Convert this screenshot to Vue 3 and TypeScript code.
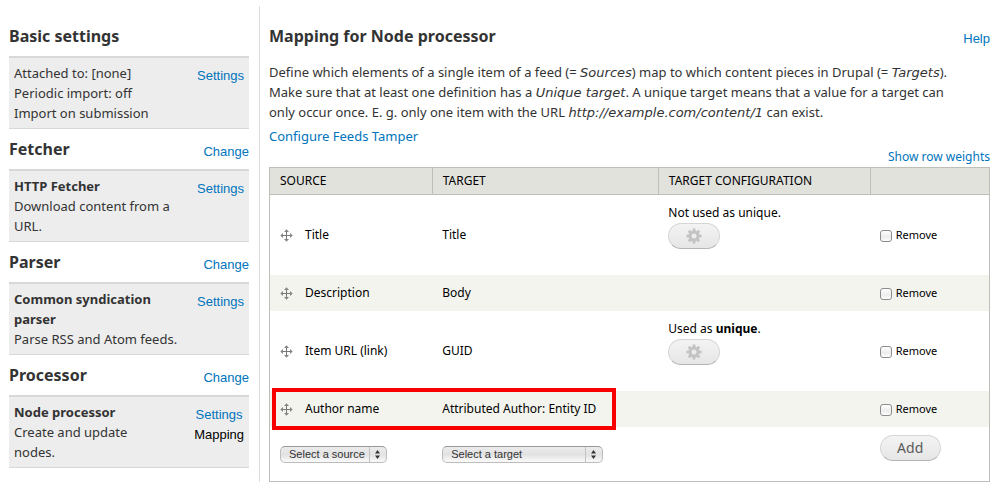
<script setup lang="ts">
import { ref } from 'vue'

interface Action {
  label: string
  active?: boolean
}
interface Block {
  heading: string
  change: boolean
  name?: string
  lines: string[]
  actions: Action[]
}
interface Mapping {
  id: string
  source: string
  target: string
  config?: { text: string; strong?: string }
  highlighted?: boolean
}

const blocks: Block[] = [
  {
    heading: 'Basic settings',
    change: false,
    lines: ['Attached to: [none]', 'Periodic import: off', 'Import on submission'],
    actions: [{ label: 'Settings' }],
  },
  {
    heading: 'Fetcher',
    change: true,
    name: 'HTTP Fetcher',
    lines: ['Download content from a URL.'],
    actions: [{ label: 'Settings' }],
  },
  {
    heading: 'Parser',
    change: true,
    name: 'Common syndication parser',
    lines: ['Parse RSS and Atom feeds.'],
    actions: [{ label: 'Settings' }],
  },
  {
    heading: 'Processor',
    change: true,
    name: 'Node processor',
    lines: ['Create and update', 'nodes.'],
    actions: [{ label: 'Settings' }, { label: 'Mapping', active: true }],
  },
]

const mappings: Mapping[] = [
  { id: 'title', source: 'Title', target: 'Title', config: { text: 'Not used as unique.' } },
  { id: 'description', source: 'Description', target: 'Body' },
  { id: 'url', source: 'Item URL (link)', target: 'GUID', config: { text: 'Used as ', strong: 'unique' } },
  { id: 'author', source: 'Author name', target: 'Attributed Author: Entity ID', highlighted: true },
]

const removed = ref<string[]>([])
const gearTeeth = [0, 45, 90, 135, 180, 225, 270, 315]
</script>

<template>
  <div class="page">
    <aside class="sidebar">
      <section v-for="block in blocks" :key="block.heading" class="block">
        <header class="block-head">
          <h2>{{ block.heading }}</h2>
          <a v-if="block.change" class="action" href="#">Change</a>
        </header>
        <div class="block-body">
          <div class="block-text">
            <strong v-if="block.name">{{ block.name }}</strong>
            <span v-for="line in block.lines" :key="line">{{ line }}</span>
          </div>
          <nav class="block-actions">
            <a
              v-for="action in block.actions"
              :key="action.label"
              class="action"
              :class="{ active: action.active }"
              href="#"
            >{{ action.label }}</a>
          </nav>
        </div>
      </section>
    </aside>

    <main class="main">
      <header class="main-head">
        <h2>Mapping for Node processor</h2>
        <a class="action" href="#">Help</a>
      </header>
      <p class="intro">
        Define which elements of a single item of a feed (= <em>Sources</em>) map to which content pieces in Drupal (= <em>Targets</em>).<br>
        Make sure that at least one definition has a <em>Unique target</em>. A unique target means that a value for a target can<br>
        only occur once. E. g. only one item with the URL <em>http://example.com/content/1</em> can exist.
      </p>
      <a class="tamper" href="#">Configure Feeds Tamper</a>
      <div class="weights"><a href="#">Show row weights</a></div>

      <table>
        <colgroup>
          <col class="c-source">
          <col class="c-target">
          <col class="c-config">
          <col class="c-remove">
        </colgroup>
        <thead>
          <tr>
            <th scope="col">SOURCE</th>
            <th scope="col">TARGET</th>
            <th scope="col">TARGET CONFIGURATION</th>
            <th scope="col" aria-label="Operations"></th>
          </tr>
        </thead>
        <tbody>
          <tr v-for="row in mappings" :key="row.id" class="row">
            <td>
              <div class="source">
                <a class="handle" href="#" aria-label="Drag to re-order">
                  <svg viewBox="0 0 13 13" width="13" height="13" aria-hidden="true">
                    <path d="M6.5 1v11M1 6.5h11" stroke="#777" fill="none" />
                    <path d="M4 3 6.500 .3 9 3ZM4 10l2.500 2.700L9 10ZM3 4 .3 6.500 3 9ZM10 4l2.700 2.500L10 9Z" fill="#858585" />
                  </svg>
                </a>
                {{ row.source }}
              </div>
              <div v-if="row.highlighted" class="highlight"></div>
            </td>
            <td>{{ row.target }}</td>
            <td class="config-cell">
              <div v-if="row.config" class="config">
                <span>{{ row.config.text }}<template v-if="row.config.strong"><strong>{{ row.config.strong }}</strong>.</template></span>
                <button type="button" class="pill gear" aria-label="Configure target">
                  <svg viewBox="0 0 16 16" width="16" height="16" aria-hidden="true">
                    <circle cx="8" cy="8" r="4" fill="none" stroke="#c3c3c3" stroke-width="3" />
                    <path
                      v-for="angle in gearTeeth"
                      :key="angle"
                      d="M6.600 .5h2.800v3h-2.800Z"
                      fill="#c3c3c3"
                      :transform="`rotate(${angle} 8 8)`"
                    />
                  </svg>
                </button>
              </div>
            </td>
            <td>
              <label class="remove">
                <input v-model="removed" type="checkbox" :value="row.id">
                <span>Remove</span>
              </label>
            </td>
          </tr>
          <tr class="add-row">
            <td>
              <div class="select select-source">
                <select aria-label="Source"><option>Select a source</option></select>
                <svg viewBox="0 0 5 9" width="5" height="9" aria-hidden="true"><path d="M2.500 0 5 3.500H0ZM0 5.500h5L2.500 9Z" fill="#333" /></svg>
              </div>
            </td>
            <td>
              <div class="select select-target">
                <select aria-label="Target"><option>Select a target</option></select>
                <svg viewBox="0 0 5 9" width="5" height="9" aria-hidden="true"><path d="M2.500 0 5 3.500H0ZM0 5.500h5L2.500 9Z" fill="#333" /></svg>
              </div>
            </td>
            <td></td>
            <td class="add-cell"><button type="button" class="pill add">Add</button></td>
          </tr>
        </tbody>
      </table>
    </main>
  </div>
</template>

<style>
body {
  background: #fff;
}
</style>

<style scoped>
* {
  box-sizing: border-box;
}
.page {
  display: flex;
  padding: 6px 11px 8px 9px;
  font: 13px/20px "Lucida Grande", "Noto Sans", "Open Sans", sans-serif;
  color: #333;
}
a {
  color: #0074bd;
  text-decoration: none;
}
h2 {
  margin: 0;
  font-size: 16px;
  line-height: 20px;
  font-weight: 700;
}
.action {
  font: 13px/20px "Liberation Sans", Arial, sans-serif;
}
.action.active {
  color: #000;
}
.sidebar {
  flex: none;
  width: 251px;
  padding: 10px 10px 10px 0;
  border-right: 1px solid #ddd;
}
.block-head {
  display: flex;
  justify-content: space-between;
  align-items: flex-end;
  height: 40px;
  padding: 10px 0 7px;
}
.block-head h2 {
  align-self: flex-start;
}
.block-body {
  display: flex;
  justify-content: space-between;
  min-height: 73px;
  padding: 5px;
  background: #ededed;
  border-top: 2px solid #d8d8d8;
  border-bottom: 1px solid #d8d8d8;
}
.block-text {
  width: 172px;
}
.block-text > * {
  display: block;
}
.block-actions {
  display: flex;
  flex-direction: column;
  align-items: center;
  padding-top: 3px;
}
.main {
  flex: 1;
  min-width: 0;
  padding: 20px 0 0 9px;
}
.main-head {
  display: flex;
  justify-content: space-between;
}
.main-head .action {
  padding-top: 3px;
}
.intro {
  margin: 13px 0 4px;
  white-space: nowrap;
}
.intro em {
  font-family: "Lucida Grande", "DejaVu Sans", sans-serif;
  line-height: 16px;
}
.tamper {
  display: block;
}
.weights {
  padding-top: 1px;
  font-size: 12px;
  text-align: right;
}
table {
  width: 100%;
  table-layout: fixed;
  border-collapse: collapse;
  border: 1px solid #bebfb9;
  color: #000;
  font-size: 12px;
}
.c-source {
  width: 22.6%;
}
.c-target {
  width: 31.4%;
}
.c-config {
  width: 29.5%;
}
.c-remove {
  width: 16.5%;
}
th {
  height: 27px;
  padding: 0 10px;
  background: #e1e2dc;
  border: 1px solid #bebfb9;
  font-weight: 400;
  text-align: left;
}
td {
  height: 36px;
  padding: 0 10px;
  vertical-align: middle;
}
td:last-child {
  padding-left: 9px;
}
.row {
  position: relative;
}
.row:nth-child(even) {
  background: #f3f4ee;
}
.source {
  display: flex;
  align-items: center;
  gap: 12px;
}
.handle {
  display: flex;
}
.config {
  display: flex;
  flex-direction: column;
  align-items: flex-start;
  padding: 8px 0 26px;
}
.pill {
  display: flex;
  align-items: center;
  justify-content: center;
  height: 26px;
  padding: 0;
  border: 1px solid #d6d6d6;
  border-bottom-color: #b4b4b4;
  border-radius: 13px;
  background: linear-gradient(#f3f3f3, #e6e6e6);
  color: #5a5a5a;
  font: 14px/20px "Lucida Grande", "Noto Sans", "Open Sans", sans-serif;
}
.gear {
  width: 52px;
}
.add {
  width: 61px;
}
.add-row td {
  height: 54px;
  padding-top: 2px;
}
.add-row .add-cell {
  padding-bottom: 14px;
}
.remove {
  display: flex;
  align-items: center;
  gap: 4px;
  font-size: 11px;
}
.remove input {
  appearance: none;
  width: 12px;
  height: 12px;
  margin: 2px 0 0;
  border: 1px solid #8c8c8c;
  border-radius: 3px;
  background: linear-gradient(#fff, #ececec 60%, #fff);
}
.remove input:checked {
  background: #0074bd;
}
.highlight {
  position: absolute;
  top: -3px;
  bottom: -3px;
  left: 2px;
  width: 344px;
  border: 4px solid #f80000;
  pointer-events: none;
}
.select {
  position: relative;
  height: 17px;
}
.select-source {
  width: 107px;
}
.select-target {
  width: 161px;
}
.select select {
  appearance: none;
  display: block;
  width: 100%;
  height: 17px;
  margin: 0;
  padding: 0 20px 0 8px;
  border: 1px solid #bcbcbc;
  border-top-color: #999;
  border-radius: 5px;
  background: linear-gradient(#ececec, #e2e2e2 50%, #fafafa);
  color: #333;
  font: 11px/15px "Liberation Sans", Arial, sans-serif;
}
.select::after {
  content: "";
  position: absolute;
  top: 1px;
  right: 17px;
  height: 15px;
  border-left: 1px solid #c2c2c2;
}
.select svg {
  position: absolute;
  top: 4px;
  right: 7px;
  pointer-events: none;
}
</style>
